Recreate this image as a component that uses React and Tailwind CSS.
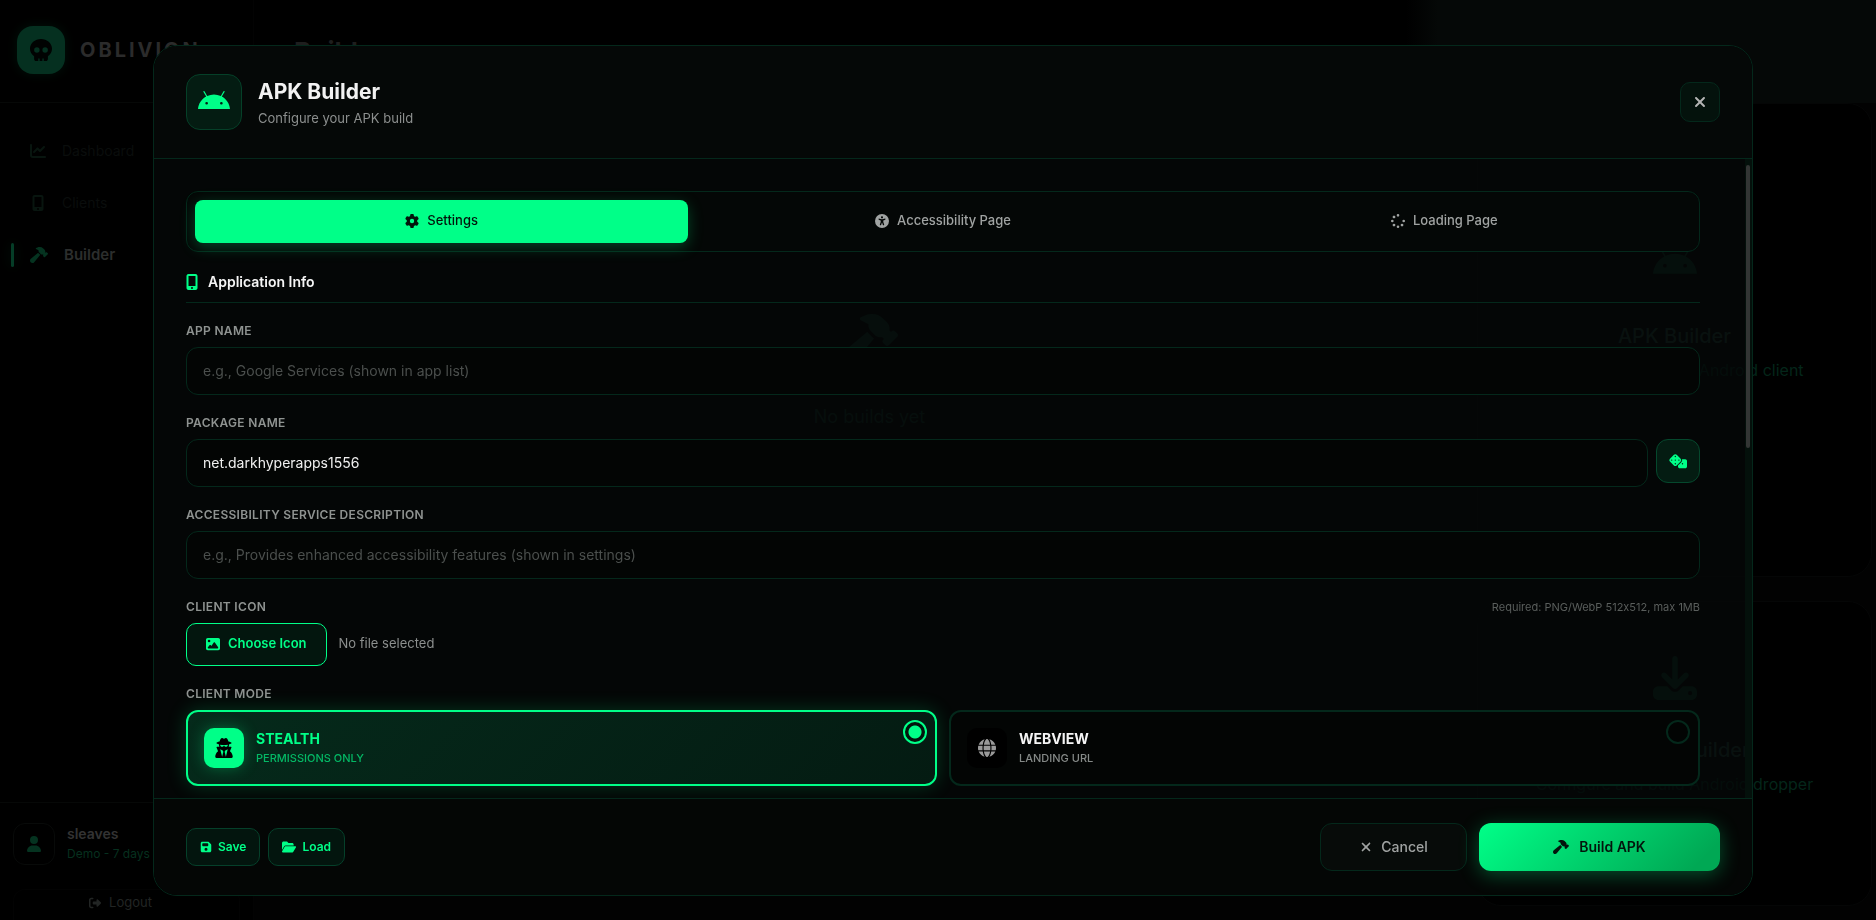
import { useState } from "react";
import {
  FaAndroid,
  FaChartLine,
  FaDice,
  FaDownload,
  FaFloppyDisk,
  FaFolderOpen,
  FaGear,
  FaGlobe,
  FaHammer,
  FaImage,
  FaMobileScreenButton,
  FaRightFromBracket,
  FaSkull,
  FaSpinner,
  FaUniversalAccess,
  FaUser,
  FaUserSecret,
  FaXmark,
} from "react-icons/fa6";

const TABS = [
  { id: "settings", label: "Settings", Icon: FaGear },
  { id: "accessibility", label: "Accessibility Page", Icon: FaUniversalAccess },
  { id: "loading", label: "Loading Page", Icon: FaSpinner },
];

const MODES = [
  { id: "stealth", title: "STEALTH", note: "PERMISSIONS ONLY", Icon: FaUserSecret },
  { id: "webview", title: "WEBVIEW", note: "LANDING URL", Icon: FaGlobe },
];

const inputClass =
  "h-12 w-full min-w-0 rounded-xl border border-[#04281b] bg-[#030504] px-4 text-sm text-[#f0f0f0] outline-none placeholder:text-[#4b4f4d]";
const labelClass = "block text-xs leading-4 font-semibold tracking-wide text-[#8f9391]";

function NavItem({ Icon, label, active }) {
  return (
    <a
      href="#"
      className={
        active
          ? "flex h-13 items-center gap-4 pl-[19px] text-[15px] font-semibold text-[#2c2e2d]"
          : "flex h-13 items-center gap-4 pl-[19px] text-sm text-[#0a0d0c]"
      }
    >
      <Icon className={active ? "size-[18px] text-[#053320]" : "size-4 text-[#08150f]"} />
      {label}
    </a>
  );
}

function Sidebar() {
  return (
    <aside className="flex w-[254px] shrink-0 flex-col border-r border-[#030303]">
      <div className="flex h-[103px] items-center gap-[15px] border-b border-[#060807] pb-0.5 pl-[17px]">
        <div className="flex size-12 items-center justify-center rounded-2xl bg-[#053020] shadow-[0_0_12px_rgba(0,255,136,0.07)]">
          <FaSkull className="size-[22px] text-[#010302]" />
        </div>
        <span className="text-xl font-bold tracking-[3px] text-[#2b2b2b]">OBLIVION</span>
      </div>
      <nav className="relative flex flex-col px-[11px] pt-[22px]">
        <NavItem Icon={FaChartLine} label="Dashboard" />
        <NavItem Icon={FaMobileScreenButton} label="Clients" />
        <div className="relative">
          <span className="absolute top-1/2 left-0 h-6 w-[3px] -translate-y-1/2 rounded-full bg-[#053d27] shadow-[0_0_12px_rgba(0,255,136,0.1)]" />
          <NavItem Icon={FaHammer} label="Builder" active />
        </div>
      </nav>
      <div className="mt-auto border-t border-[#060807] px-[13px] pt-5">
        <div className="flex items-center gap-3 pb-6">
          <div className="flex size-[42px] items-center justify-center rounded-xl border border-[#080a09]">
            <FaUser className="size-4 text-[#053320]" />
          </div>
          <div>
            <div className="text-sm leading-5 font-semibold text-[#333]">sleaves</div>
            <div className="text-xs leading-5 whitespace-nowrap text-[#06301f]">Demo - 7 days left</div>
          </div>
        </div>
        <button className="flex h-[31px] w-full items-center justify-center gap-2 rounded-t-xl border border-b-0 border-[#030303] pr-3 pb-1 text-[13px] text-[#222524]">
          <FaRightFromBracket className="size-3" />
          Logout
        </button>
      </div>
    </aside>
  );
}

function BuilderCard({ Icon, title, note, className }) {
  return (
    <section className={className}>
      <Icon className="size-11 text-[#06301f]" />
      <h2 className="mt-9 text-xl leading-7 font-medium text-[#1a3a30]">{title}</h2>
      <p className="mt-2 text-base leading-6 whitespace-nowrap text-[#04261a]">{note}</p>
    </section>
  );
}

function Page() {
  return (
    <div className="flex h-screen overflow-hidden bg-black" aria-hidden="true">
      <Sidebar />
      <main className="flex min-w-0 grow flex-col">
        <header className="flex h-[103px] shrink-0 items-center bg-[linear-gradient(to_right,#000_71%,#050807_73%)] pl-10">
          <h1 className="text-[26px] font-bold text-[#1e1e1e]">Builder</h1>
        </header>
        <div className="flex grow gap-6 bg-[#020202] pr-1 pb-[14px] pl-8">
          <section className="flex grow flex-col items-center pt-52">
            <FaHammer className="size-14 text-[#0a2a1f]" />
            <p className="mt-9 text-lg leading-7 text-[#0c2a20]">No builds yet</p>
          </section>
          <div className="flex w-[395px] shrink-0 flex-col gap-6">
            <BuilderCard
              Icon={FaAndroid}
              title="APK Builder"
              note="Configure and build Android client"
              className="flex h-[474px] flex-col items-center justify-center rounded-3xl border border-[#050606] bg-black pb-14"
            />
            <BuilderCard
              Icon={FaDownload}
              title="Dropper Builder"
              note="Configure and build Android dropper"
              className="flex grow flex-col items-center rounded-3xl border border-[#050606] bg-black pt-[54px]"
            />
          </div>
        </div>
      </main>
    </div>
  );
}

function ModeCard({ mode, checked, onSelect }) {
  const { Icon } = mode;
  return (
    <label
      className={
        checked
          ? "relative flex cursor-pointer items-center gap-3 rounded-xl border-2 border-[#00ff88] bg-[linear-gradient(135deg,#052a1b,#041b12)] p-4 shadow-[0_0_20px_rgba(0,255,136,0.2)]"
          : "relative flex cursor-pointer items-center gap-3 rounded-xl border-2 border-[#04281b] bg-[#030504] p-4"
      }
    >
      <span
        className={
          checked
            ? "flex size-10 items-center justify-center rounded-[10px] bg-[#00ff88] text-black shadow-[0_0_15px_rgba(0,255,136,0.3)]"
            : "flex size-10 items-center justify-center rounded-[10px] bg-black text-[#9a9a9a]"
        }
      >
        <Icon className={checked ? "size-5" : "size-[18px]"} />
      </span>
      <span className="flex flex-col gap-0.5">
        <span className={checked ? "text-sm leading-[18px] font-bold text-[#00ff88]" : "text-sm leading-[18px] font-bold text-[#f5f5f5]"}>
          {mode.title}
        </span>
        <span className={checked ? "text-[11px] leading-4 font-medium text-[#04b865]" : "text-[11px] leading-4 font-medium text-[#858987]"}>
          {mode.note}
        </span>
      </span>
      <input
        type="radio"
        name="mode"
        value={mode.id}
        checked={checked}
        onChange={onSelect}
        className="absolute top-2 right-2 size-6 appearance-none rounded-full border-2 border-[#04281b] bg-[#020403] checked:border-[#00ff88] checked:bg-[radial-gradient(circle,#00ff88_6px,#02140c_7px)]"
      />
    </label>
  );
}

function BuilderDialog() {
  const [tab, setTab] = useState("settings");
  const [mode, setMode] = useState("stealth");

  return (
    <div
      role="dialog"
      aria-labelledby="dialog-title"
      className="flex h-[92.5vh] w-full max-w-[1600px] flex-col overflow-hidden rounded-3xl border border-[#04281b]"
    >
      <header className="flex shrink-0 items-center gap-4 border-b border-[#04281b] bg-[#050807] px-8 py-7">
        <div className="flex size-14 items-center justify-center rounded-[14px] border border-[#054028] bg-[#041c12]">
          <FaAndroid className="size-8 text-[#00ff88]" />
        </div>
        <div className="grow pt-1">
          <h2 id="dialog-title" className="text-[21px] leading-7 font-bold text-[#f2f2f2]">
            APK Builder
          </h2>
          <p className="text-[13px] leading-6 text-[#8c8f8e]">Configure your APK build</p>
        </div>
        <button
          aria-label="Close"
          className="flex size-10 items-center justify-center rounded-[10px] border border-[#04281b] bg-[#04120c] text-[#b4b4b4]"
        >
          <FaXmark className="size-4" />
        </button>
      </header>

      <div className="relative min-h-0 grow overflow-hidden bg-[#050807]/80 pt-8 pr-[52px] pl-8">
        <div className="absolute top-0 right-0 bottom-0 w-[7px] bg-[#04100b]">
          <div className="mt-1.5 ml-px h-[283px] w-1 rounded-full bg-[#333534]" />
        </div>

        <div role="tablist" className="grid grid-cols-3 gap-2 rounded-xl border border-[#04281b] bg-[#040706] p-2">
          {TABS.map(({ id, label, Icon }) => (
            <button
              key={id}
              role="tab"
              aria-selected={tab === id}
              onClick={() => setTab(id)}
              className={
                tab === id
                  ? "flex h-[43px] items-center justify-center gap-2 rounded-lg bg-[#00ff88] text-[13px] font-medium text-[#03150c] shadow-[0_4px_15px_rgba(0,255,136,0.25)]"
                  : "flex h-[43px] items-center justify-center gap-2 rounded-lg text-[13px] font-medium text-[#a0a3a2]"
              }
            >
              <Icon className="size-[14px]" />
              {label}
            </button>
          ))}
        </div>

        <h3 className="mt-[18px] flex items-center gap-2.5 border-b border-[#04281b] pb-2 text-sm leading-6 font-semibold text-[#f5f5f5]">
          <FaMobileScreenButton className="h-4 w-3 text-[#00ff88]" />
          Application Info
        </h3>

        <form className="flex flex-col gap-5 pt-5" onSubmit={(event) => event.preventDefault()}>
          <div className="flex flex-col gap-2">
            <label htmlFor="app-name" className={labelClass}>
              APP NAME
            </label>
            <input id="app-name" className={inputClass} placeholder="e.g., Google Services (shown in app list)" />
          </div>

          <div className="flex flex-col gap-2">
            <label htmlFor="package-name" className={labelClass}>
              PACKAGE NAME
            </label>
            <div className="flex items-start gap-2">
              <input id="package-name" className={inputClass} defaultValue="net.darkhyperapps1556" />
              <button
                type="button"
                aria-label="Random package name"
                className="flex size-11 shrink-0 items-center justify-center rounded-xl border border-[#05482d] bg-[#041c12] text-[#00ff88]"
              >
                <FaDice className="size-[18px]" />
              </button>
            </div>
          </div>

          <div className="flex flex-col gap-2">
            <label htmlFor="service-description" className={labelClass}>
              ACCESSIBILITY SERVICE DESCRIPTION
            </label>
            <input
              id="service-description"
              className={inputClass}
              placeholder="e.g., Provides enhanced accessibility features (shown in settings)"
            />
          </div>

          <div className="flex flex-col gap-2">
            <div className="flex items-center justify-between">
              <span className={labelClass}>CLIENT ICON</span>
              <span className="text-[11px] leading-4 text-[#5a5e5c] [font-feature-settings:'calt'_0]">
                Required: PNG/WebP 512x512, max 1MB
              </span>
            </div>
            <div className="flex items-center gap-3">
              <button
                type="button"
                className="flex h-[43px] items-center gap-2 rounded-[10px] border border-[#00ff88] bg-[#03160e] px-[19px] text-[13px] font-semibold text-[#00ff88]"
              >
                <FaImage className="size-[14px]" />
                Choose Icon
              </button>
              <span className="text-[13px] text-[#8c8f8e]">No file selected</span>
            </div>
          </div>

          <fieldset>
            <legend className={labelClass}>CLIENT MODE</legend>
            <div className="grid grid-cols-2 gap-3 pt-2">
              {MODES.map((item) => (
                <ModeCard key={item.id} mode={item} checked={mode === item.id} onSelect={() => setMode(item.id)} />
              ))}
            </div>
          </fieldset>
        </form>
      </div>

      <footer className="flex shrink-0 items-center justify-between border-t border-[#04281b] bg-[#040605] px-8 py-6">
        <div className="flex gap-2">
          <button className="flex h-[38px] items-center gap-1.5 rounded-[10px] border border-[#05402a] bg-[#03150e] px-[13px] text-xs font-semibold text-[#00ff88]">
            <FaFloppyDisk className="size-3" />
            Save
          </button>
          <button className="flex h-[38px] items-center gap-1.5 rounded-[10px] border border-[#05402a] bg-[#03150e] px-[13px] text-xs font-semibold text-[#00ff88]">
            <FaFolderOpen className="size-[14px]" />
            Load
          </button>
        </div>
        <div className="flex gap-3">
          <button className="flex h-12 w-[147px] items-center justify-center gap-2 rounded-xl border border-[#04281b] bg-[#070b09] text-sm font-medium text-[#a0a3a2]">
            <FaXmark className="size-[14px]" />
            Cancel
          </button>
          <button className="flex h-12 w-[241px] items-center justify-center gap-2.5 rounded-xl bg-[linear-gradient(135deg,#00ff88_0%,#00a854_90%)] text-sm font-semibold text-[#03150c] shadow-[0_4px_20px_rgba(0,255,136,0.3)]">
            <FaHammer className="size-4" />
            Build APK
          </button>
        </div>
      </footer>
    </div>
  );
}

export default function App() {
  return (
    <div className="font-['Inter','Liberation_Sans',sans-serif]">
      <Page />
      <div className="fixed inset-0 flex items-center justify-center pt-5 pl-[30px]">
        <BuilderDialog />
      </div>
    </div>
  );
}
